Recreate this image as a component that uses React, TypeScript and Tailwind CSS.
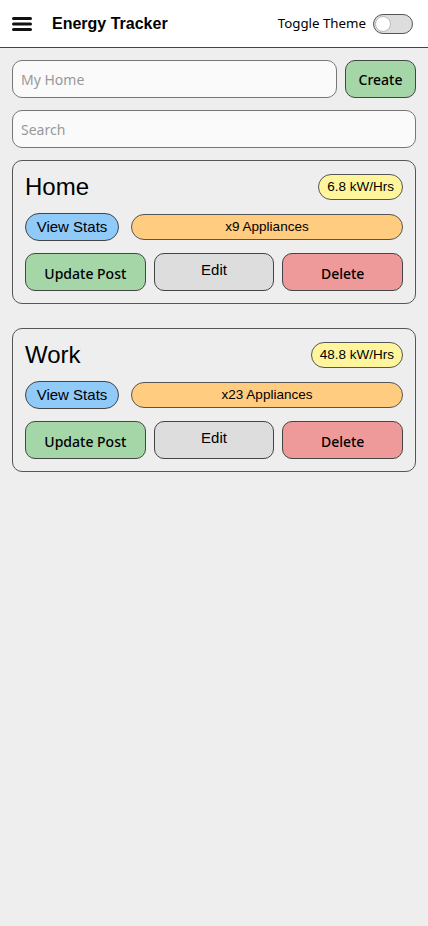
const POSTS = [
  { id: 1, name: "Home", usage: "6.8 kW/Hrs", appliances: 9 },
  { id: 2, name: "Work", usage: "48.8 kW/Hrs", appliances: 23 },
];

const arial = "font-['Liberation_Sans',Arial,sans-serif]";
const noto = "font-['Noto_Sans','Open_Sans',sans-serif]";

function PostCard({ post }: { post: (typeof POSTS)[number] }) {
  return (
    <div className="border border-[#555] rounded-[10px] px-3 py-3">
      <div className="flex items-center justify-between h-7">
        <h2 className={`${arial} text-[24px] leading-none text-black`}>{post.name}</h2>
        <span
          className={`${arial} text-[13.5px] h-[26px] flex items-center px-2 rounded-full bg-[#fff59d] border border-[#555]`}
        >
          {post.usage}
        </span>
      </div>
      <div className="flex items-center gap-3 mt-3 h-7">
        <button
          className={`${arial} text-[15px] h-7 w-[94px] rounded-full bg-[#90caf9] border border-[#444]`}
        >
          View Stats
        </button>
        <div
          className={`${arial} text-[13.5px] flex-1 h-[26px] flex items-center justify-center rounded-full bg-[#ffcc80] border border-[#555]`}
        >
          x{post.appliances} Appliances
        </div>
      </div>
      <div className="grid grid-cols-3 gap-2 mt-3">
        <button
          className={`${noto} text-[14px] font-medium h-[38px] pt-[2px] rounded-[10px] bg-[#a5d6a7] border border-[#444]`}
        >
          Update Post
        </button>
        <button
          className={`${arial} text-[15px] h-[38px] pb-[4px] rounded-[10px] bg-[#dddddd] border border-[#444]`}
        >
          Edit
        </button>
        <button
          className={`${noto} text-[14px] font-medium h-[38px] pt-[2px] rounded-[10px] bg-[#ef9a9a] border border-[#444]`}
        >
          Delete
        </button>
      </div>
    </div>
  );
}

export default function App() {
  return (
    <div className="min-h-[926px] bg-[#eeeeee] text-black">
      {/* Header */}
      <header className="h-12 bg-white border-b border-[#444] flex items-center pl-3 pr-[15px]">
        <svg width="20" height="16" viewBox="0 0 20 16" className="mt-[1px]">
          <rect x="0" y="1" width="20" height="3" rx="1.5" fill="#111" />
          <rect x="0" y="6.5" width="20" height="3" rx="1.5" fill="#111" />
          <rect x="0" y="12" width="20" height="3" rx="1.5" fill="#111" />
        </svg>
        <h1 className={`${arial} font-bold text-[16px] ml-5`}>Energy Tracker</h1>
        <div className="ml-auto flex items-center gap-[7px]">
          <span className={`${noto} text-[13.3px]`}>Toggle Theme</span>
          <div className="w-10 h-5 rounded-full bg-[#dddddd] border border-[#555] flex items-center px-[1px]">
            <div className="w-4 h-4 rounded-full bg-white border border-[#bbb]" />
          </div>
        </div>
      </header>

      <main className="px-3 pt-3 flex flex-col">
        <div className="flex gap-2">
          <input
            placeholder="My Home"
            className={`${noto} flex-1 min-w-0 h-[38px] px-2 text-[14px] rounded-[10px] bg-[#fafafa] border border-[#777] placeholder:text-[#999] outline-none`}
          />
          <button
            className={`${noto} font-medium text-[14px] h-[38px] w-[71px] rounded-[10px] bg-[#a5d6a7] border border-[#444]`}
          >
            Create
          </button>
        </div>
        <input
          placeholder="Search"
          className={`${noto} mt-3 h-[38px] px-2 text-[14px] rounded-[10px] bg-[#fafafa] border border-[#777] placeholder:text-[#999] outline-none`}
        />
        <div className="mt-3 flex flex-col gap-6">
          {POSTS.map((p) => (
            <PostCard key={p.id} post={p} />
          ))}
        </div>
      </main>
    </div>
  );
}
